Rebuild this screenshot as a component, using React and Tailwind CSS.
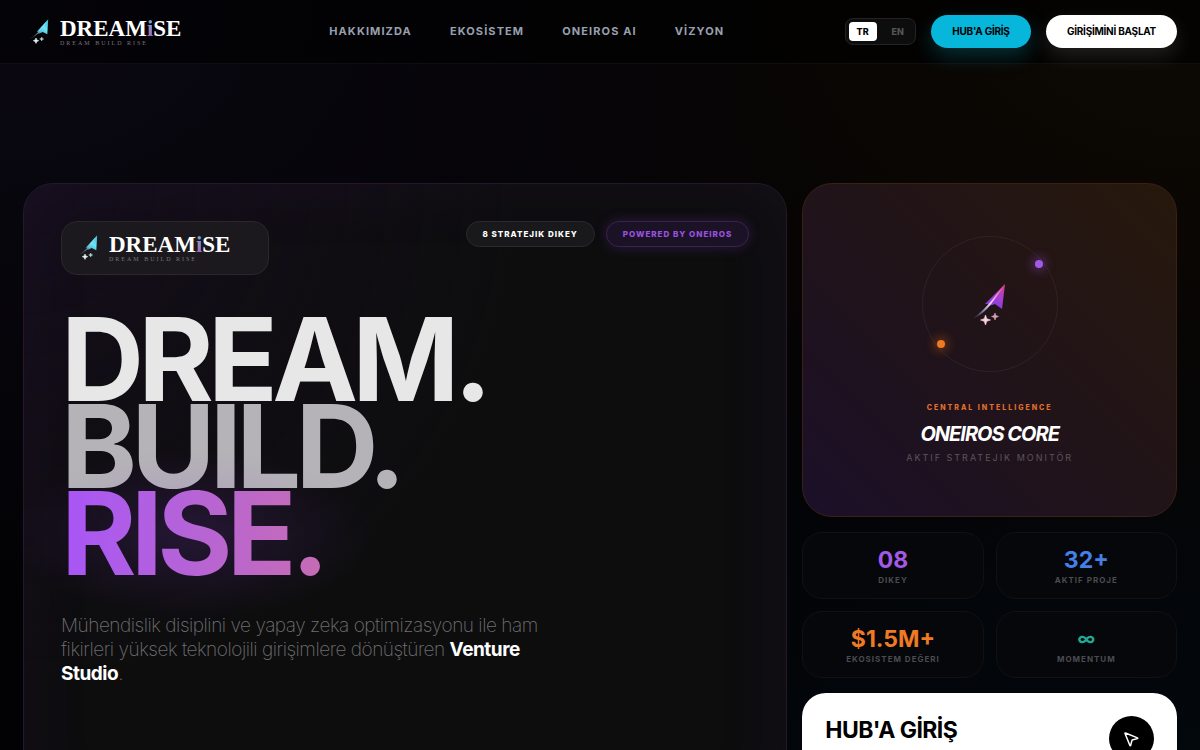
import React, { useState } from "react";
import { MousePointer2 } from "lucide-react";

const navLinks = [
  { label: "HAKKIMIZDA", href: "#hakkimizda" },
  { label: "EKOSİSTEM", href: "#ekosistem" },
  { label: "ONEIROS AI", href: "#oneiros" },
  { label: "VİZYON", href: "#vizyon" },
];

const stats = [
  { value: "08", label: "DIKEY", style: "text-[23px] text-[#a259e6]" },
  { value: "32+", label: "AKTIF PROJE", style: "text-[23px] text-[#4480e8]" },
  { value: "$1.5M+", label: "EKOSISTEM DEĞERI", style: "text-[23px] text-[#f07a24]" },
  { value: "∞", label: "MOMENTUM", style: "text-[18px] text-[#20a894]" },
];

const Logo = () => (
  <div className="flex items-center gap-[10px]">
    <svg className="w-5 h-7 overflow-visible" viewBox="0 0 20 28" fill="none" aria-hidden="true">
      <defs>
        <linearGradient id="wing" x1="18" y1="2" x2="8" y2="17" gradientUnits="userSpaceOnUse">
          <stop stopColor="#35b9e0" />
          <stop offset="0.5" stopColor="#6fe6f4" />
          <stop offset="1" stopColor="#2f9fcc" />
        </linearGradient>
        <linearGradient id="trail" x1="15" y1="6" x2="0" y2="21" gradientUnits="userSpaceOnUse">
          <stop stopColor="#a8f1fa" />
          <stop offset="0.5" stopColor="#8fb4c4" />
          <stop offset="1" stopColor="#34465a" stopOpacity="0.2" />
        </linearGradient>
      </defs>
      <path d="M18.200 1.200L6.700 13.800l2.800-.1-1.300 2.300 4.500-2 4.600 2.300L18.200 1.200z" fill="url(#wing)" />
      <path d="M17 3C12 8 9 16-1 21c8-2 12-9 18-18z" fill="url(#trail)" />
      <path d="M6 20l.8 1.900 1.900.8-1.900.8L6 25.400l-.8-1.900-1.900-.8 1.900-.8z" fill="#e8fbff" stroke="#e8fbff" strokeWidth="0.6" />
      <path d="M11.700 19l.6 1.400 1.400.6-1.400.6-.6 1.400-.6-1.400L9.700 21l1.400-.6z" fill="#bfe6f2" stroke="#bfe6f2" strokeWidth="0.4" />
    </svg>
    <div className="flex flex-col font-['Liberation_Serif',serif]">
      <span className="text-[23px] leading-[22px] font-bold text-white">
        DREAM
        <span className="bg-linear-to-b from-[#3fb8d8] to-[#b04fb0] bg-clip-text text-transparent">i</span>
        SE
      </span>
      <span className="text-[6px] leading-[6px] tracking-[2px] text-[#77757c]">DREAM BUILD RISE</span>
    </div>
  </div>
);

const LanguageSwitch = () => {
  const [lang, setLang] = useState("TR");

  return (
    <div className="flex items-center rounded-lg border border-[#232323] bg-[#0d0d0d] p-[3px]">
      {["TR", "EN"].map((code) => (
        <button
          key={code}
          onClick={() => setLang(code)}
          className={`h-[19px] rounded px-2 text-[9px] font-extrabold ${
            lang === code ? "mr-[7px] bg-white text-black" : "text-[#555555]"
          }`}
        >
          {code}
        </button>
      ))}
    </div>
  );
};

const Header = () => (
  <header className="flex h-16 items-center justify-between border-b border-[#0f0e11] bg-black/60 pl-[30px] pr-[23px]">
    <a href="#top" aria-label="Dreamise" className="w-[179px]">
      <Logo />
    </a>
    <nav className="flex items-center gap-[38px]">
      {navLinks.map((link) => (
        <a key={link.href} href={link.href} className="text-[11px] font-bold tracking-widest text-[#98a0ae]">
          {link.label}
        </a>
      ))}
    </nav>
    <div className="flex items-center gap-[15px]">
      <LanguageSwitch />
      <button className="h-[33px] w-[100px] rounded-full bg-[#06b6db] text-[10px] font-bold tracking-tight text-black shadow-[0_8px_20px_rgba(6,182,212,0.25)]">
        HUB'A GİRİŞ
      </button>
      <button className="h-[33px] w-[131px] rounded-full bg-white text-[10px] font-bold tracking-tight text-black shadow-[0_8px_20px_rgba(255,255,255,0.12)]">
        GİRİŞİMİNİ BAŞLAT
      </button>
    </div>
  </header>
);

const HeroCard = () => (
  <section className="col-span-8 min-h-[640px] rounded-[30px] border border-[#221a2b] bg-[#0d0d0e] bg-[radial-gradient(circle_at_0%_0%,#140d1a_0%,transparent_50%)] p-[37px] shadow-[inset_0_0_70px_rgba(88,40,130,0.1)]">
    <div className="flex items-start justify-between">
      <div className="flex h-[54px] w-[208px] items-center rounded-2xl border border-[#2a272d] bg-[#1b191d] pl-[17px]">
        <Logo />
      </div>
      <div className="flex gap-[11px]">
        <span className="flex h-[26px] items-center rounded-full border border-[#29292b] bg-[#19191b] px-4 text-[8px] font-extrabold tracking-[1px] text-white">
          8 STRATEJIK DIKEY
        </span>
        <span className="flex h-[26px] items-center rounded-full border border-[#3b2152] bg-[#1c1226] px-4 text-[8px] font-extrabold tracking-[1px] text-[#9b51e0] shadow-[0_0_14px_rgba(168,85,247,0.2)]">
          POWERED BY ONEIROS
        </span>
      </div>
    </div>

    <h1 className="mt-[41px] flex flex-col items-start text-[115px] leading-[87px] font-bold tracking-tighter">
      <span className="text-[#e7e7e7]">DREAM.</span>
      <span className="text-[#b5b3b7]">BUILD.</span>
      <span className="relative">
        <span className="absolute -inset-x-12 -inset-y-10 bg-[radial-gradient(closest-side,rgba(130,60,200,0.2),rgba(130,60,200,0.08)_60%,transparent)]" />
        <span className="relative bg-linear-to-r from-[#a855f7] to-[#c66cb4] bg-clip-text text-transparent">
          RISE.
        </span>
      </span>
    </h1>

    <p className="mt-[37px] max-w-[500px] text-[19px] leading-[24px] font-extralight tracking-tight text-[#707072]">
      Mühendislik disiplini ve yapay zeka optimizasyonu ile ham fikirleri yüksek teknolojili
      girişimlere dönüştüren <strong className="font-bold text-white">Venture Studio</strong>.
    </p>
  </section>
);

const CoreCard = () => (
  <section className="flex h-[334px] flex-col items-center rounded-[30px] border border-[#3a2115] bg-[linear-gradient(45deg,#1b1029_0%,#20131a_45%,#27180c_100%)] pt-[52px] text-center">
    <div className="relative flex size-[136px] items-center justify-center rounded-full border border-[#2e2226]">
      <span className="absolute right-[14px] top-[23px] size-2 rounded-full bg-[#a259e6] shadow-[0_0_12px_#a855f7]" />
      <span className="absolute bottom-[23px] left-[14px] size-2 rounded-full bg-[#f07a24] shadow-[0_0_12px_#f97316]" />
      <svg className="size-[60px]" viewBox="0 0 60 60" fill="none" aria-hidden="true">
        <defs>
          <linearGradient id="coreWing" x1="45" y1="9" x2="30" y2="34" gradientUnits="userSpaceOnUse">
            <stop stopColor="#e0407c" />
            <stop offset="0.5" stopColor="#a83fd0" />
            <stop offset="1" stopColor="#7b3fe0" />
          </linearGradient>
          <linearGradient id="coreTrail" x1="43" y1="14" x2="12" y2="45" gradientUnits="userSpaceOnUse">
            <stop stopColor="#f05aa8" />
            <stop offset="0.45" stopColor="#f3d9fa" />
            <stop offset="0.7" stopColor="#7c7c98" />
            <stop offset="1" stopColor="#3a3648" stopOpacity="0.2" />
          </linearGradient>
        </defs>
        <path d="M45 10L25 30l4 0-3 3 9-3 7 5L45 10z" fill="url(#coreWing)" />
        <path d="M44 12C34 22 28 34 12 45c12-4 19-14 32-33z" fill="url(#coreTrail)" />
        <path d="M25.500 41l1.300 3.700 3.700 1.300-3.700 1.300-1.300 3.700-1.300-3.700-3.700-1.300 3.700-1.300z" fill="#fbd3dd" stroke="#fbd3dd" strokeWidth="0.6" />
        <path d="M35 39l.9 2.600 2.600.9-2.600.9-.9 2.600-.9-2.600-2.600-.9 2.600-.9z" fill="#d9a0b4" stroke="#d9a0b4" strokeWidth="0.6" />
      </svg>
    </div>
    <p className="mt-[31px] text-[7px] leading-[10px] font-extrabold tracking-[2px] text-[#e2702a]">
      CENTRAL INTELLIGENCE
    </p>
    <h2 className="mt-[8px] text-[20px] leading-[26px] font-bold italic tracking-tighter text-white">ONEIROS CORE</h2>
    <p className="mt-[5px] text-[9px] leading-[12px] font-normal tracking-[2px] text-[#5d545c]">
      AKTIF STRATEJIK MONITÖR
    </p>
  </section>
);

const StatGrid = () => (
  <div className="grid grid-cols-2 gap-[12px]">
    {stats.map((stat) => (
      <div
        key={stat.label}
        className="flex h-[67px] flex-col items-center justify-center rounded-[20px] border border-[#0f1114] bg-[#06070a] pt-[3px]"
      >
        <span className={`leading-[26px] font-bold ${stat.style}`}>{stat.value}</span>
        <span className="text-[8px] leading-[14px] font-bold tracking-[1px] text-[#4b4c50]">{stat.label}</span>
      </div>
    ))}
  </div>
);

const HubCard = () => (
  <a
    href="#hub"
    className="flex min-h-[120px] items-start justify-between rounded-3xl bg-white p-[23px] text-black"
  >
    <span className="text-[23px] leading-[28px] font-bold tracking-tight">HUB'A GİRİŞ</span>
    <span className="flex size-[45px] items-center justify-center rounded-full bg-black text-white">
      <MousePointer2 className="size-[18px]" />
    </span>
  </a>
);

const App = () => {
  return (
    <div
      id="top"
      className="min-h-screen bg-[#020204] bg-[radial-gradient(ellipse_at_0%_0%,#0b0812_0%,transparent_50%),radial-gradient(ellipse_at_100%_0%,#0e0903_0%,transparent_50%),radial-gradient(ellipse_at_100%_100%,#03090f_0%,transparent_50%)] font-['Inter',sans-serif] antialiased"
    >
      <Header />
      <main className="grid grid-cols-12 gap-[15px] px-[23px] pt-[119px] pb-10">
        <HeroCard />
        <div className="col-span-4 flex flex-col gap-[15px]">
          <CoreCard />
          <StatGrid />
          <HubCard />
        </div>
      </main>
    </div>
  );
};

export default App;
